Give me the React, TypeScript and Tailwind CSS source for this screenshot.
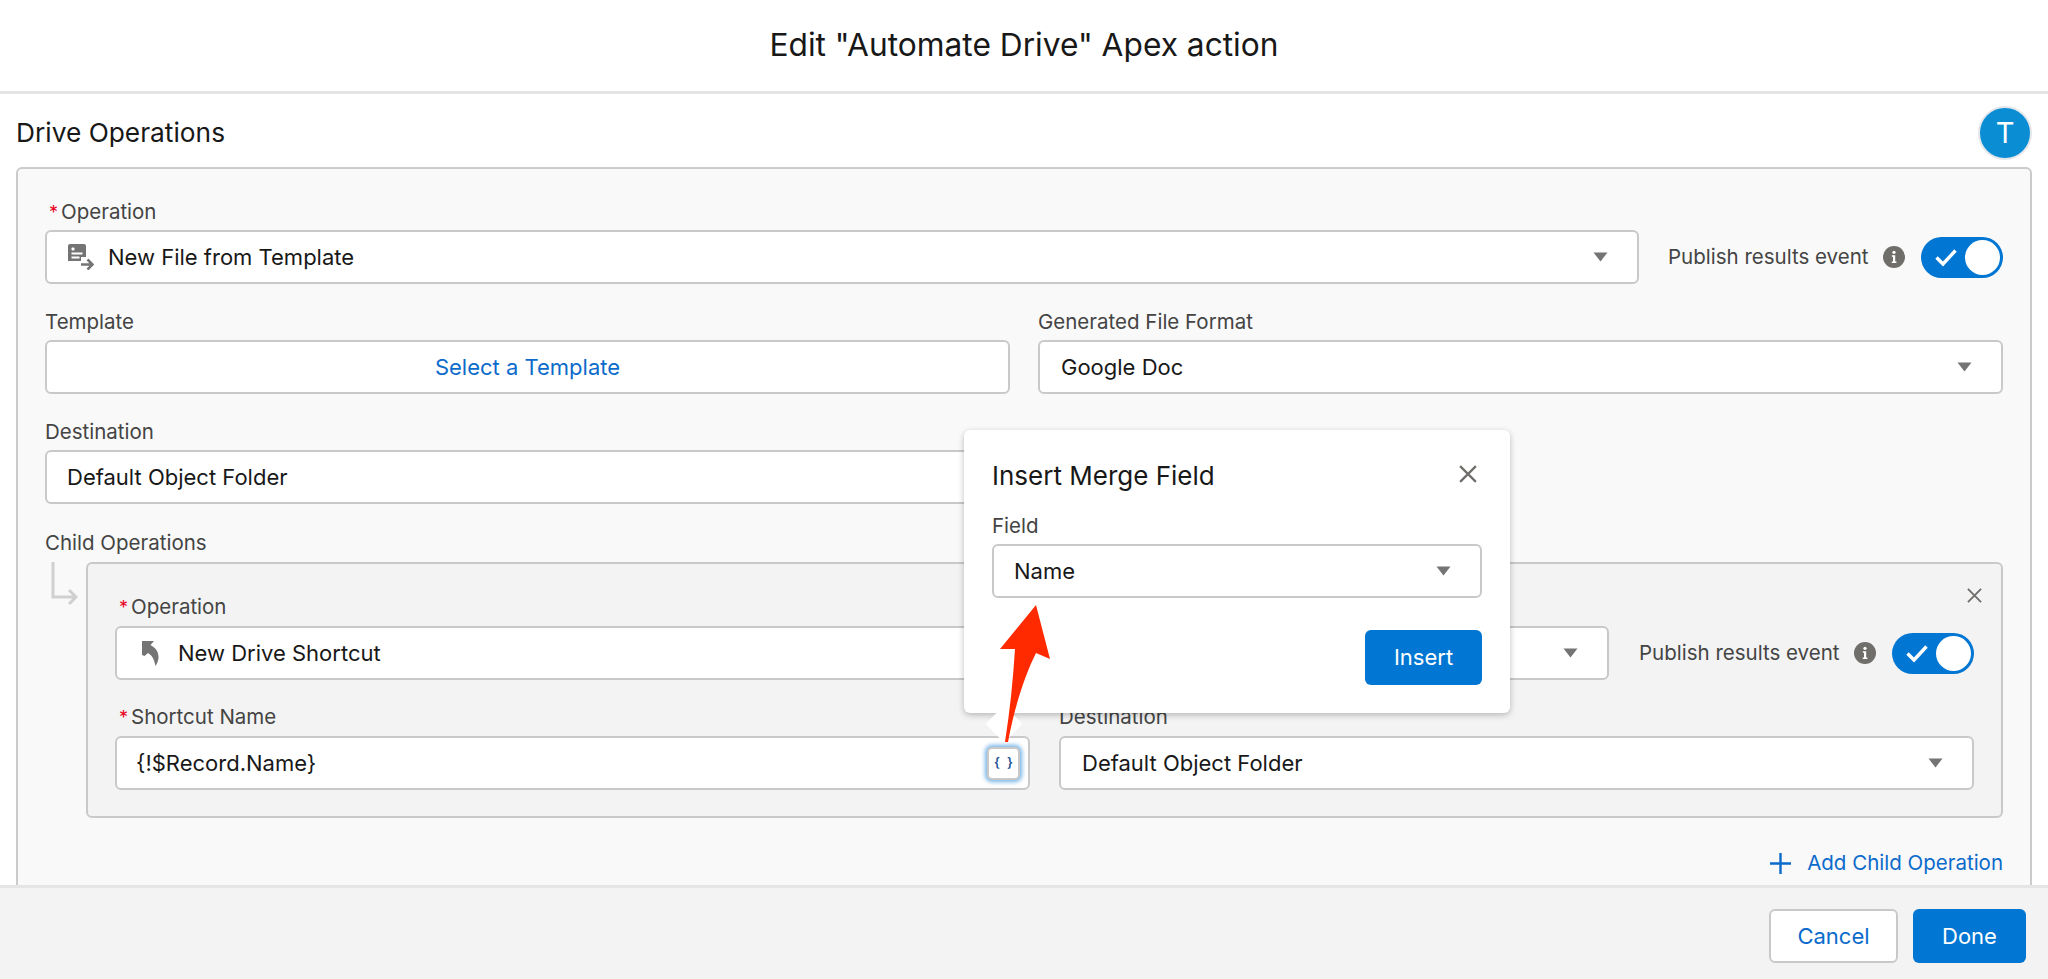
import type { ReactNode } from "react";

function CaretDown() {
  return (
    <svg width="15" height="10" viewBox="0 0 15 10" className="shrink-0">
      <path d="M0.5 0.5h14L7.5 9.5z" fill="#747474" />
    </svg>
  );
}

function CloseIcon({ size, color }: { size: number; color: string }) {
  return (
    <svg width={size} height={size} viewBox="0 0 16 16">
      <path d="M1 1l14 14M15 1L1 15" stroke={color} strokeWidth="2" fill="none" />
    </svg>
  );
}

function InfoIcon() {
  return (
    <svg width="22" height="22" viewBox="0 0 22 22" className="shrink-0">
      <circle cx="11" cy="11" r="11" fill="#706e6b" />
      <circle cx="11" cy="6.3" r="1.6" fill="#fff" />
      <path d="M8.8 9.2h3.4v6.2h1.2v1.6H8.7v-1.6h1.3v-4.6H8.8z" fill="#fff" />
    </svg>
  );
}

function Toggle() {
  return (
    <div className="flex h-[41px] w-[82px] shrink-0 items-center justify-between rounded-full bg-[#0176d3] pl-[13px] pr-[3px]">
      <svg width="24" height="20" viewBox="0 0 24 20">
        <path d="M2.5 10.5l6.5 6.5L21.5 3.5" stroke="#fff" strokeWidth="3.4" fill="none" />
      </svg>
      <div className="h-[35px] w-[35px] rounded-full bg-white" />
    </div>
  );
}

function PublishEvent() {
  return (
    <div className="flex h-[54px] shrink-0 items-center">
      <span className="w-[215px] pt-[1px] text-[20.5px] text-[#444444]">Publish results event</span>
      <InfoIcon />
      <div className="ml-[16px]">
        <Toggle />
      </div>
    </div>
  );
}

function Field({
  label,
  required,
  gap,
  children,
}: {
  label: string;
  required?: boolean;
  gap: string;
  children: ReactNode;
}) {
  return (
    <div className="min-w-0 flex-1">
      <div className={`flex h-[26px] items-center text-[20.5px] text-[#444444] ${gap}`}>
        {required ? <span className="ml-[4px] w-[12px] text-[18px] text-[#ea001e]">*</span> : null}
        {label}
      </div>
      {children}
    </div>
  );
}

function SelectBox({ icon, value, pad }: { icon?: ReactNode; value: string; pad: string }) {
  return (
    <div
      className={`flex h-[54px] items-center rounded-[6px] border-2 border-[#c9c9c9] bg-white pr-[29px] text-[22px] text-[#181818] ${pad}`}
    >
      {icon}
      <span className="flex-1">{value}</span>
      <CaretDown />
    </div>
  );
}

function FileArrowIcon() {
  return (
    <svg width="26" height="26" viewBox="0 0 26 26" className="mr-[14px] shrink-0">
      <path d="M2 0h14a2 2 0 0 1 2 2v11h-5v4H0V2a2 2 0 0 1 2-2z" fill="#747474" />
      <rect x="3.5" y="3.5" width="3" height="3" rx="1" fill="#fff" />
      <rect x="3.5" y="8.5" width="11" height="2" fill="#fff" />
      <rect x="3.5" y="12.5" width="8" height="2" fill="#fff" />
      <path d="M13 20.5h11M19.5 15.5l5 5-5 5" stroke="#747474" strokeWidth="2.6" fill="none" />
    </svg>
  );
}

function ShortcutIcon() {
  return (
    <svg width="18" height="25" viewBox="0 0 18 25" className="mr-[19px] shrink-0">
      <path d="M1 0h12L9.5 4C15 7 17.500 11 17.500 16c0 3-1 6-3 9-1-5-2.500-10-7.500-13L3.500 15 1 14z" fill="#747474" />
    </svg>
  );
}

export default function App() {
  return (
    <div className="relative flex h-[979px] w-[2048px] flex-col overflow-hidden bg-white font-['Inter',sans-serif]">
      <header className="flex h-[94px] shrink-0 items-center justify-center border-b-[3px] border-[#e5e5e5] bg-white pb-[2px] text-[31.7px] text-[#181818]">
        Edit "Automate Drive" Apex action
      </header>

      <main className="min-h-0 flex-1 overflow-hidden px-4">
        <div className="flex h-[73px] items-center justify-between pt-[4px]">
          <h1 className="text-[26.3px] text-[#181818]">Drive Operations</h1>
          <div className="flex h-[54px] w-[54px] items-center justify-center rounded-full border-2 border-[#e3e6ea] bg-[#0b8dd4] text-[29px] text-white">
            T
          </div>
        </div>

        <section className="rounded-t-[6px] border-2 border-[#cbcbcb] bg-[#f9f9f9] px-[27px] pb-[40px] pt-[30px]">
          <div className="flex items-end gap-[29px]">
            <Field label="Operation" required gap="mb-[5px]">
              <SelectBox icon={<FileArrowIcon />} value="New File from Template" pad="pl-[21px]" />
            </Field>
            <PublishEvent />
          </div>

          <div className="mt-[25px] grid grid-cols-2 gap-[28px]">
            <Field label="Template" gap="mb-[5px]">
              <button className="flex h-[54px] w-full items-center justify-center rounded-[6px] border-2 border-[#c9c9c9] bg-white pt-[1px] text-[22px] text-[#0b6bcb]">
                Select a Template
              </button>
            </Field>
            <Field label="Generated File Format" gap="mb-[5px]">
              <SelectBox value="Google Doc" pad="pl-[21px]" />
            </Field>
          </div>

          <div className="mt-[25px] grid grid-cols-2 gap-[28px]">
            <Field label="Destination" gap="mb-[5px]">
              <SelectBox value="Default Object Folder" pad="pl-[20px]" />
            </Field>
          </div>

          <div className="mt-[26px] flex h-[26px] items-center text-[20.5px] text-[#444444]">Child Operations</div>

          <div className="mt-[6px] flex">
            <svg width="41" height="44" viewBox="0 0 41 44" className="shrink-0">
              <path d="M8 0v35h22M24 28l7 7-7 7" stroke="#d0d0d0" strokeWidth="3" fill="none" />
            </svg>
            <div className="relative h-[256px] flex-1 rounded-[6px] border-2 border-[#c9c9c9] bg-[#f3f3f3] pl-[27px] pr-[27px] pt-[30px]">
              <button className="absolute right-[19px] top-[24px]">
                <CloseIcon size={15} color="#706e6b" />
              </button>
              <div className="flex items-end gap-[30px]">
                <Field label="Operation" required gap="mb-[6px]">
                  <SelectBox icon={<ShortcutIcon />} value="New Drive Shortcut" pad="pl-[24px]" />
                </Field>
                <PublishEvent />
              </div>
              <div className="mt-[24px] grid grid-cols-2 gap-[29px]">
                <Field label="Shortcut Name" required gap="mb-[6px]">
                  <div className="flex h-[54px] items-center rounded-[6px] border-2 border-[#c9c9c9] bg-white pl-[19px] pr-[8px] text-[22px] text-[#181818]">
                    <span className="flex-1">{"{!$Record.Name}"}</span>
                    <span className="flex h-[33px] w-[33px] items-center justify-center gap-[7px] rounded-[5px] border-2 border-[#c9c9c9] bg-white text-[13px] font-semibold text-[#1b5297] shadow-[0_0_4px_2px_rgba(1,118,211,0.55)]">
                      <span>{"{"}</span>
                      <span>{"}"}</span>
                    </span>
                  </div>
                </Field>
                <Field label="Destination" gap="mb-[6px]">
                  <SelectBox value="Default Object Folder" pad="pl-[21px]" />
                </Field>
              </div>
            </div>
          </div>

          <div className="mt-[32px] flex h-[26px] items-center justify-end text-[20.5px] text-[#0b6bcb]">
            <svg width="21" height="21" viewBox="0 0 21 21" className="mr-[16px]">
              <path d="M10.500 0v21M0 10.500h21" stroke="#0b6bcb" strokeWidth="2.400" fill="none" />
            </svg>
            Add Child Operation
          </div>
        </section>
      </main>

      <footer className="flex h-[94px] shrink-0 items-start justify-end gap-[15px] border-t-[3px] border-[#e5e5e5] bg-[#f3f3f3] pr-[22px] pt-[21px]">
        <button className="h-[54px] w-[129px] rounded-[6px] border-2 border-[#c9c9c9] bg-white text-[22px] text-[#0b6bcb]">
          Cancel
        </button>
        <button className="h-[54px] w-[113px] rounded-[6px] bg-[#0176d3] text-[22px] text-white">Done</button>
      </footer>

      <div className="absolute left-[964px] top-[430px] h-[283px] w-[546px] rounded-[6px] bg-white shadow-[0_2px_6px_rgba(0,0,0,0.25)]">
        <div className="absolute left-[27px] top-[281px] h-[26px] w-[26px] rotate-45 bg-white" />
        <div className="relative flex h-full flex-col px-[28px] pt-[26px]">
          <div className="flex items-center justify-between pr-[4px]">
            <h2 className="text-[26px] text-[#181818]">Insert Merge Field</h2>
            <button className="-mt-[4px] pr-[1px]">
              <CloseIcon size={18} color="#706e6b" />
            </button>
          </div>
          <div className="mt-[18px] flex h-[26px] items-center text-[20.5px] text-[#444444]">Field</div>
          <div className="mt-[5px]">
            <SelectBox value="Name" pad="pl-[20px]" />
          </div>
          <div className="mt-[32px] flex justify-end">
            <button className="h-[55px] w-[117px] rounded-[6px] bg-[#0176d3] text-[22px] text-white">Insert</button>
          </div>
        </div>
      </div>

      <svg width="2048" height="979" viewBox="0 0 2048 979" className="pointer-events-none absolute left-0 top-0">
        <path
          d="M1036 605L1000 649L1015 649C1013 680 1010 710 1005 742L1008 742C1015 705 1025 675 1036 653L1050 659Z"
          fill="#ff2a00"
        />
      </svg>
    </div>
  );
}
